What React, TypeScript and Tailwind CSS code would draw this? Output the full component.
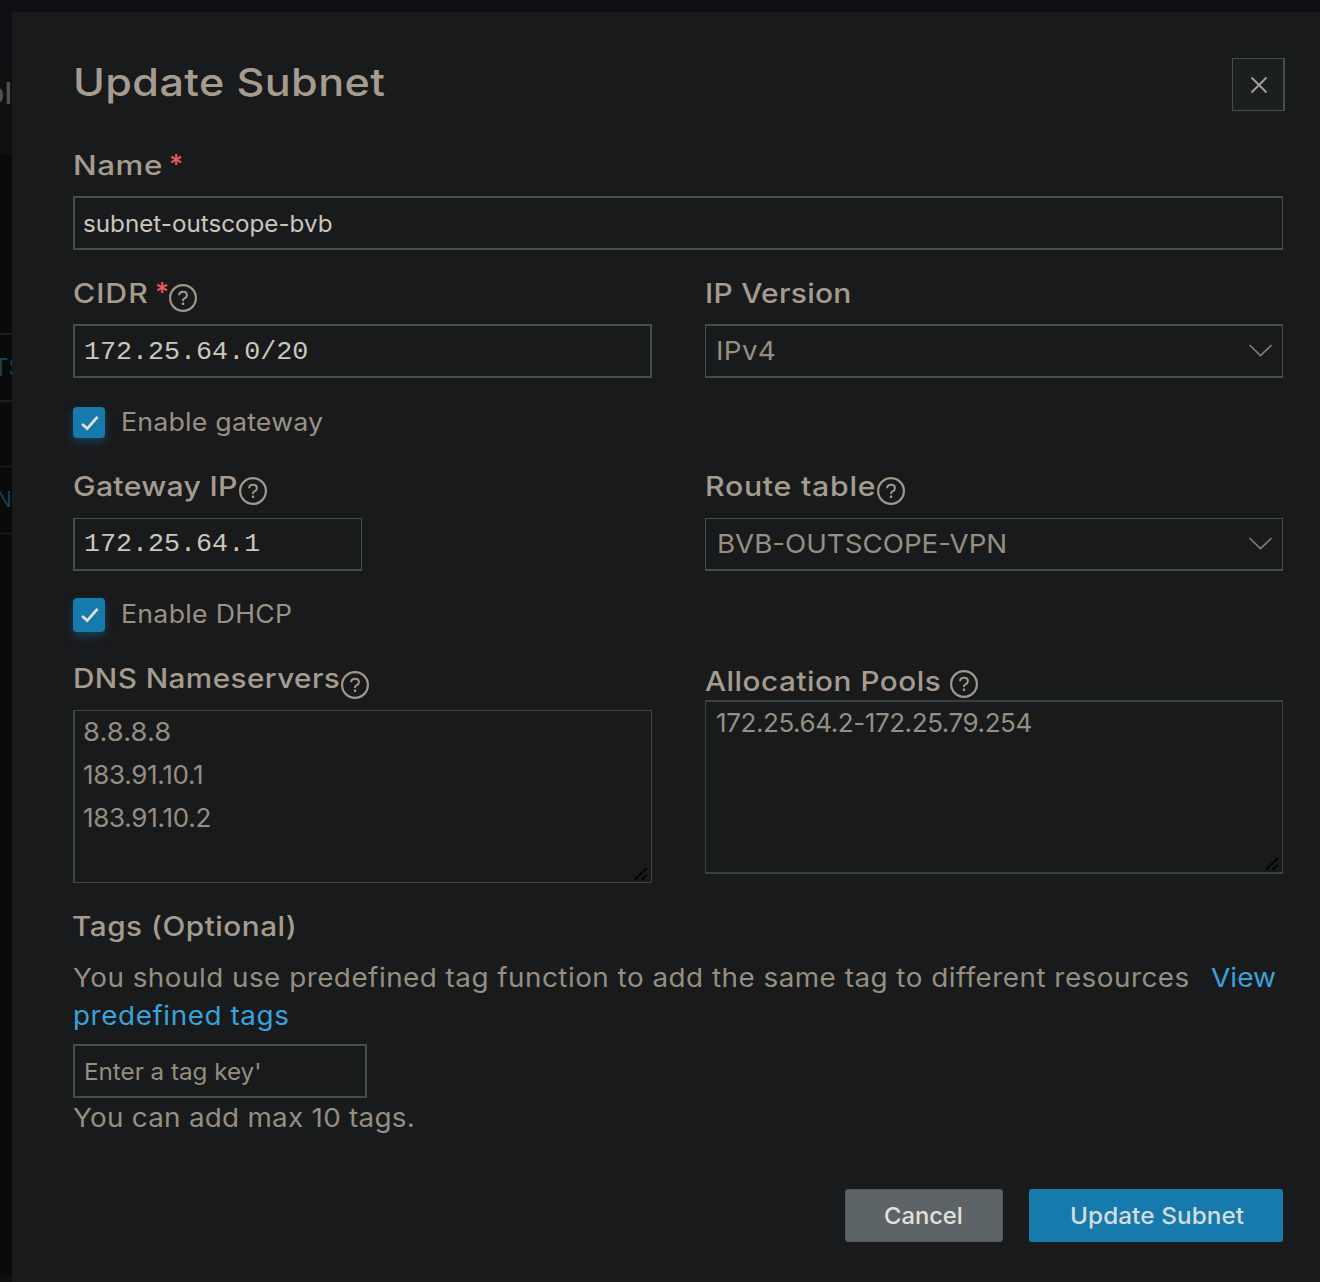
import type { ReactNode } from "react";

function Text({ children, className = "" }: { children: ReactNode; className?: string }) {
  return <span className={`inline-block origin-left whitespace-nowrap ${className}`}>{children}</span>;
}

function HelpIcon({ className = "" }: { className?: string }) {
  return (
    <svg viewBox="0 0 28 28" fill="none" className={`absolute size-7 text-[#a0978a] ${className}`}>
      <circle cx="14" cy="14" r="12.9" stroke="currentColor" strokeWidth="2.2" />
      <path
        d="M10.1 11.3c0-2.2 1.7-3.5 3.9-3.5s3.9 1.4 3.9 3.4c0 1.7-1.1 2.5-2.4 3.1-1.1.5-1.5 1-1.5 2v.8"
        stroke="currentColor"
        strokeWidth="2"
      />
      <rect x="12.9" y="18.6" width="2.3" height="2.3" rx=".5" fill="currentColor" />
    </svg>
  );
}

function Asterisk({ className = "" }: { className?: string }) {
  return (
    <span className={`absolute text-[27px] leading-[34px] font-medium text-[#ee5a5c] ${className}`}>*</span>
  );
}

function Chevron() {
  return (
    <svg viewBox="0 0 24 14" fill="none" className="mr-[10px] h-[14px] w-6 shrink-0">
      <path d="M1.5 1 12.5 11.5 23.5 1" stroke="#7c7d7d" strokeWidth="1.7" />
    </svg>
  );
}

function Label({ children, className = "" }: { children: ReactNode; className?: string }) {
  return (
    <div className={`relative h-[34px] text-[27px] leading-[34px] font-medium text-[#a59c8f] ${className}`}>
      {children}
    </div>
  );
}

function Checkbox({ label, className, textClass }: { label: string; className: string; textClass: string }) {
  return (
    <div className="flex items-center">
      <span
        className={`flex w-8 items-center justify-center rounded-[4px] bg-[#177aac] shadow-[0_4px_8px_rgba(23,122,172,0.4)] ${className}`}
      >
        <svg viewBox="0 0 20 16" fill="none" className="h-4 w-5">
          <path d="M3.1 9 8.2 13.6 18.5 1.8" stroke="#e6e3df" strokeWidth="2.7" />
        </svg>
      </span>
      <span className="ml-4 text-[25px] leading-[30px] text-[#9a9185]">
        <Text className={textClass}>{label}</Text>
      </span>
    </div>
  );
}

function ResizeGrip() {
  return (
    <svg viewBox="0 0 16 16" fill="none" className="absolute right-[2px] bottom-[1px] size-4">
      <path d="M2 14.5 14 3M8.5 14.5 14 10" stroke="#050505" strokeWidth="2.4" strokeDasharray="5 .6" />
    </svg>
  );
}

export default function App() {
  return (
    <div className="flex h-[1282px] w-[1320px] flex-col overflow-hidden bg-[#0e0f14] font-['Inter',sans-serif]">
      <div className="h-3 shrink-0" />
      <div className="flex min-h-0 flex-1">
        {/* Sliver of the page behind the drawer */}
        <div className="flex w-3 shrink-0 flex-col overflow-hidden bg-[#090b0a] text-[#173e54]">
          <div className="flex h-[142px] shrink-0 justify-end bg-gradient-to-b from-[#0e0f13] to-[#0f1010] pt-[63px]">
            <span className="text-[30px] leading-[36px] font-medium text-[#55514c]">ol</span>
          </div>
          <div className="h-[181px] shrink-0 border-b-2 border-[#1c1e1e]" />
          <div className="h-[67px] shrink-0 border-b-2 border-[#1c1e1e]">
            <span className="-ml-[7px] block text-[24px] leading-[65px]">TS</span>
          </div>
          <div className="h-[65px] shrink-0 border-b border-[#1c1e1e]" />
          <div className="h-[67px] shrink-0 border-b border-[#1c1e1e]">
            <span className="-ml-[4px] block text-[21px] leading-[65px]">N</span>
          </div>
          <div className="flex-1" />
          <div className="h-[6px] shrink-0 bg-[#0e0f11]" />
        </div>

        <div className="flex flex-1 flex-col bg-[#191a1c] pt-[46px] pr-[37px] pl-[61px]">
          <div className="flex h-[53px] items-start justify-between">
            <h1 className="text-[38.5px] leading-[48px] font-medium text-[#a59c8f]">
              <Text className="scale-x-[1.12] tracking-[0.35px]">Update Subnet</Text>
            </h1>
            <button className="-mr-[2px] flex h-[53px] w-[53px] items-center justify-center border border-r-2 border-[#454d4d] bg-[#1c1f20] pl-px">
              <svg viewBox="0 0 18 18" fill="none" className="size-[18px]">
                <path d="M1.5 1.5 16.5 16.5M16.5 1.5 1.5 16.5" stroke="#a59c8f" strokeWidth="2" />
              </svg>
            </button>
          </div>

          <Label className="mt-[37px]">
            <Text className="translate-y-px scale-x-[1.16] tracking-[0.47px]">Name</Text>
            <Asterisk className="left-[96px] top-0" />
          </Label>
          <div className="mt-[14px] flex h-[54px] items-center border-2 border-r border-[#454d4d] pl-[8px] text-[23.5px] text-[#cbc6be]">
            <Text className="translate-y-px scale-x-[1.03]">subnet-outscope-bvb</Text>
          </div>

          <div className="mt-[26px] grid h-[102px] grid-cols-[579px_578px] gap-x-[53px]">
            <div>
              <Label>
                <Text className="translate-y-px scale-x-[1.12] tracking-[0.86px]">CIDR</Text>
                <Asterisk className="left-[82px] top-0" />
                <HelpIcon className="left-[95.5px] top-[8px]" />
              </Label>
              <div className="mt-[14px] flex h-[54px] items-center border-2 border-[#454d4d] pt-[2px] pl-[9px] font-['Liberation_Mono',monospace] text-[26.7px] text-[#cbc6be]">
                172.25.64.0/20
              </div>
            </div>
            <div>
              <Label>
                <Text className="translate-y-px scale-x-[1.11] tracking-[0.23px]">IP Version</Text>
              </Label>
              <div className="mt-[14px] flex h-[54px] items-center justify-between border border-y-2 border-[#454d4d] pl-[10px] text-[26px] text-[#978e82]">
                <Text className="-translate-y-px scale-x-[1.07] tracking-[0.3px]">IPv4</Text>
                <Chevron />
              </div>
            </div>
          </div>

          <div className="mt-[29px]">
            <Checkbox
              label="Enable gateway"
              className="h-[31px]"
              textClass="-translate-y-px scale-x-[1.07] tracking-[0.19px]"
            />
          </div>

          <div className="mt-[32px] grid h-[101px] grid-cols-[579px_578px] gap-x-[53px]">
            <div>
              <Label>
                <Text className="scale-x-[1.12] tracking-[0.26px]">Gateway IP</Text>
                <HelpIcon className="left-[165.5px] top-[7px]" />
              </Label>
              <div className="mt-[14px] flex h-[53px] w-[289px] items-center border border-b-2 border-l-2 border-[#454d4d] pl-[9px] font-['Liberation_Mono',monospace] text-[26.7px] text-[#cbc6be]">
                172.25.64.1
              </div>
            </div>
            <div>
              <Label>
                <Text className="scale-x-[1.12] tracking-[0.66px]">Route table</Text>
                <HelpIcon className="left-[171.5px] top-[7px]" />
              </Label>
              <div className="mt-[14px] flex h-[53px] items-center justify-between border border-b-2 border-[#454d4d] pl-[11px] text-[26px] text-[#978e82]">
                <Text className="-translate-y-px scale-x-[1.065]">BVB-OUTSCOPE-VPN</Text>
                <Chevron />
              </div>
            </div>
          </div>

          <div className="mt-[27px]">
            <Checkbox
              label="Enable DHCP"
              className="h-[34px]"
              textClass="-translate-y-px scale-x-[1.065] tracking-[0.3px]"
            />
          </div>

          <div className="mt-[29px] grid h-[222px] grid-cols-[579px_578px] gap-x-[53px]">
            <div>
              <Label>
                <Text className="translate-y-px scale-x-[1.1] tracking-[0.38px]">DNS Nameservers</Text>
                <HelpIcon className="left-[267.5px] top-[10px]" />
              </Label>
              <div className="relative mt-[15px] h-[173px] border border-l-2 border-[#3f4444] pl-[8px] text-[26px] leading-[42.7px] text-[#978e82]">
                <div>
                  <Text className="scale-x-[1.05] tracking-[0.12px]">8.8.8.8</Text>
                </div>
                <div>
                  <Text className="tracking-[-0.3px]">183.91.10.1</Text>
                </div>
                <div>
                  <Text className="translate-y-px tracking-[-0.27px]">183.91.10.2</Text>
                </div>
                <ResizeGrip />
              </div>
            </div>
            <div className="pt-[3px]">
              <Label>
                <Text className="translate-y-px scale-x-[1.1] tracking-[0.48px]">Allocation Pools</Text>
                <HelpIcon className="left-[244.5px] top-[5.5px]" />
              </Label>
              <div className="relative mt-[2px] h-[174px] border border-y-2 border-[#394140] pl-[10px] text-[26px] leading-[42px] text-[#978e82]">
                <Text className="tracking-[-0.42px]">172.25.64.2-172.25.79.254</Text>
                <ResizeGrip />
              </div>
            </div>
          </div>

          <Label className="mt-[26px]">
            <Text className="-translate-x-px translate-y-px scale-x-[1.1] tracking-[0.48px]">Tags (Optional)</Text>
          </Label>
          <div className="mt-[15px] h-[76px] text-[26px] leading-[38px] text-[#978e82]">
            <div className="flex">
              <span className="w-[1138px]">
                <Text className="translate-y-px scale-x-[1.07] tracking-[0.46px]">
                  You should use predefined tag function to add the same tag to different resources
                </Text>
              </span>
              <Text className="translate-y-px scale-x-[1.08] text-[#38a3dc]">View</Text>
            </div>
            <Text className="translate-y-px scale-x-[1.07] tracking-[0.55px] text-[#38a3dc]">predefined tags</Text>
          </div>
          <div className="mt-[10px] flex h-[54px] w-[294px] items-center border-2 border-[#454d4d] pl-[9px] text-[23.5px] text-[#978e82]">
            <Text className="translate-y-px scale-x-[1.03]">Enter a tag key'</Text>
          </div>
          <div className="h-[39px] text-[26px] leading-[39px] text-[#978e82]">
            <Text className="scale-x-[1.07] tracking-[0.25px]">You can add max 10 tags.</Text>
          </div>

          <div className="mt-[52px] flex justify-end gap-[26px] text-[23.5px] font-medium">
            <button className="flex h-[53px] w-[158px] items-center justify-center rounded-[3px] border border-[#535b60] bg-[#5c6366] pr-[2px] text-[#e3e0dc]">
              <Text className="origin-center scale-x-[1.01]">Cancel</Text>
            </button>
            <button className="flex h-[53px] w-[254px] items-center justify-center rounded-[3px] bg-[#177aac] pr-[3px] text-[#d5dde0]">
              <Text className="origin-center scale-x-[1.03] tracking-[0.13px]">Update Subnet</Text>
            </button>
          </div>
        </div>
      </div>
    </div>
  );
}
